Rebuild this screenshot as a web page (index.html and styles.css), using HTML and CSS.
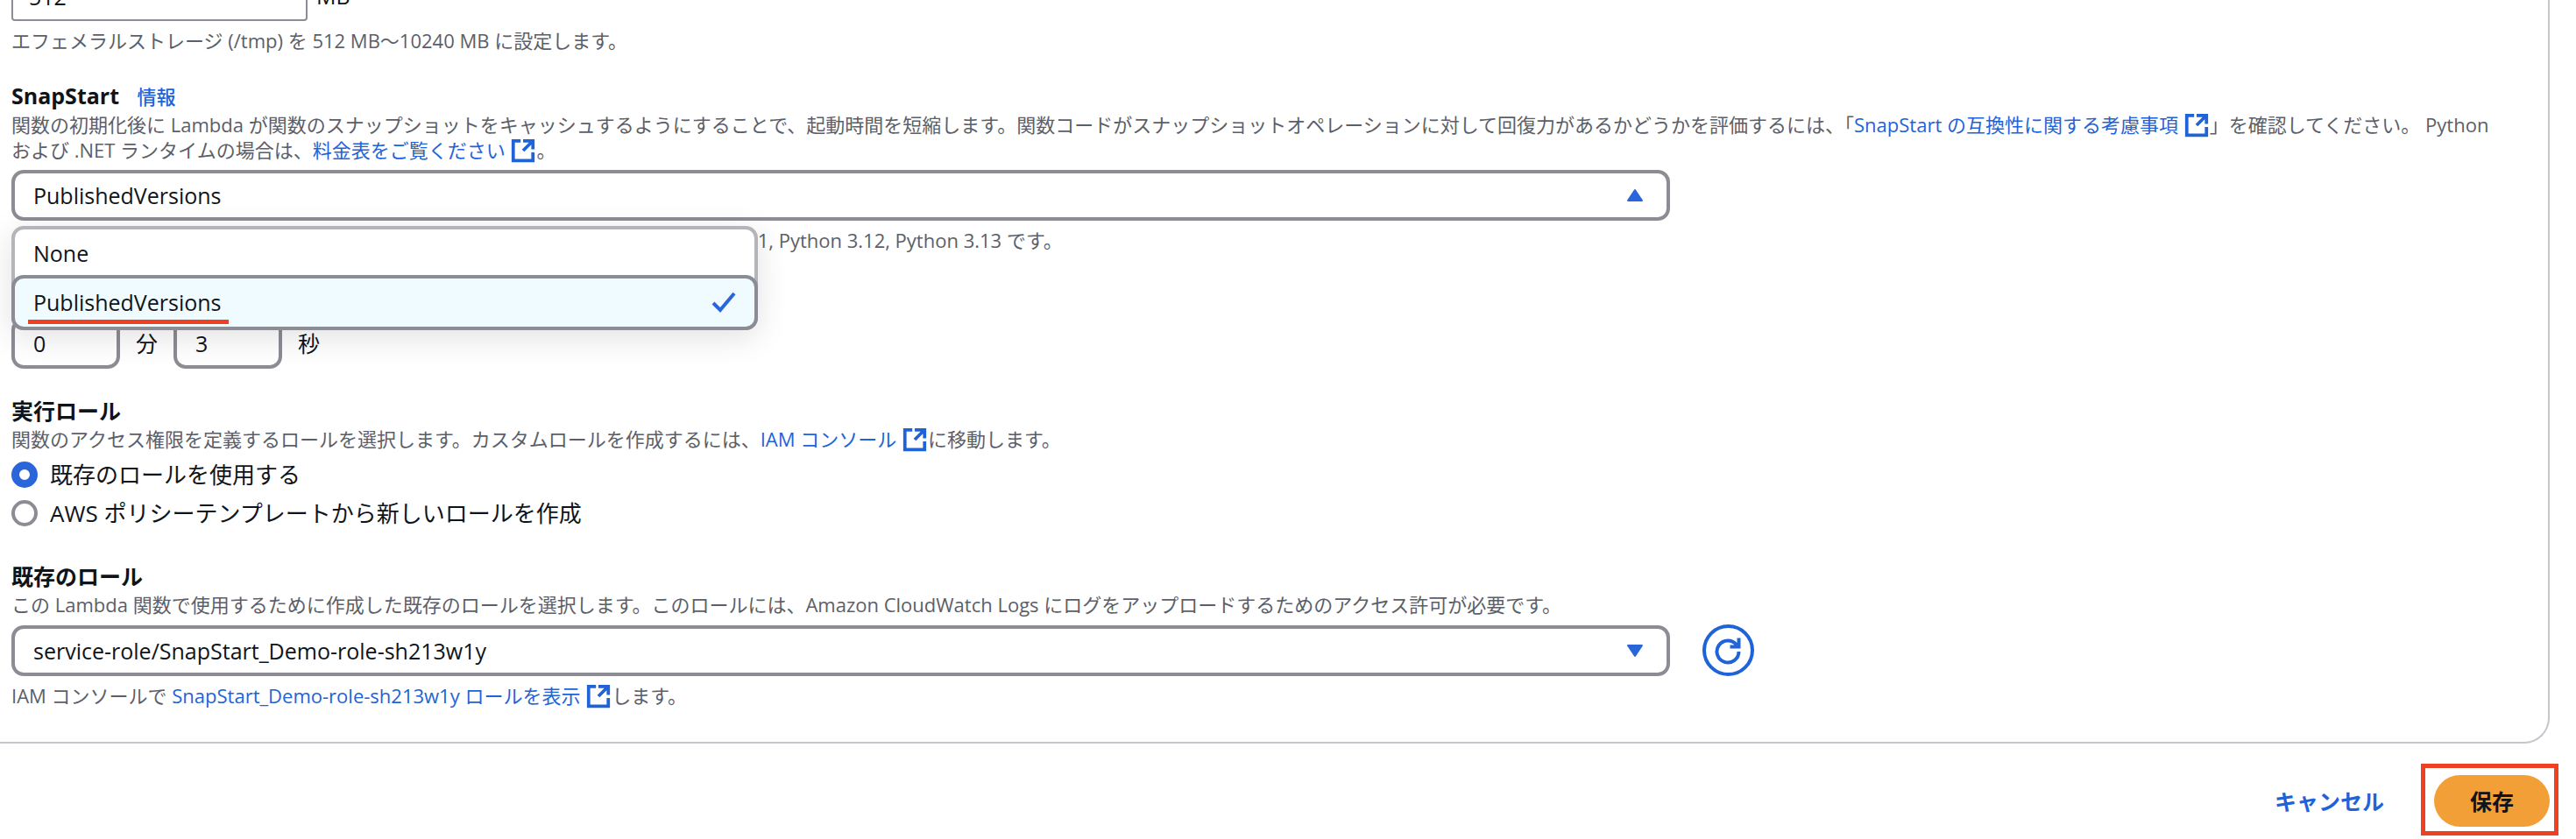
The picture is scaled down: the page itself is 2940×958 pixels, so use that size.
FILE: index.html
```html
<!DOCTYPE html>
<html lang="ja">
<head>
<meta charset="UTF-8">
<meta name="viewport" content="width=device-width, initial-scale=1.0">
<title>基本設定を編集</title>
<link rel="stylesheet" href="styles.css">
</head>
<body>
<!-- shared icons -->
<svg class="sprite" aria-hidden="true">
  <symbol id="external" viewBox="0 0 16 16">
    <path d="M6.500 2H2v12h12V9M8 2h6v5.200M14 2L8 8" fill="none" stroke="currentColor" stroke-width="2"/>
  </symbol>
</svg>

<form class="card" id="settings">
  <section class="field">
    <div class="row storage">
      <input class="box" type="text" id="storage" value="512" aria-label="エフェメラルストレージ">
      <label for="storage">MB</label>
    </div>
    <p class="hint">エフェメラルストレージ (/tmp) を 512 MB〜10240 MB に設定します。</p>
  </section>

  <section class="field">
    <div class="heading">
      <label for="snapstart">SnapStart</label>
      <a class="info" href="#">情報</a>
    </div>
    <p class="desc">関数の初期化後に Lambda が関数のスナップショットをキャッシュするようにすることで、起動時間を短縮します。関数コードがスナップショットオペレーションに対して回復力があるかどうかを評価するには、「<a href="#">SnapStart の互換性に関する考慮事項 <svg class="ext"><use href="#external"/></svg></a>」を確認してください。 Python および .NET ランタイムの場合は、<a href="#">料金表をご覧ください <svg class="ext"><use href="#external"/></svg></a>。</p>
    <div class="select">
      <select class="box" id="snapstart">
        <option>None</option>
        <option selected>PublishedVersions</option>
      </select>
      <svg class="caret" viewBox="0 0 20 16"><path d="M10 2L18 14H2z" fill="currentColor" stroke="currentColor" stroke-width="2" stroke-linejoin="round"/></svg>
      <ul class="menu" role="listbox" aria-label="SnapStart">
        <li role="option">None</li>
        <li role="option" class="selected" aria-selected="true">
          <span class="underlined">PublishedVersions</span>
          <svg class="check" viewBox="0 0 28 24"><path d="M2 13L10 21L26 2" fill="none" stroke="currentColor" stroke-width="4"/></svg>
        </li>
      </ul>
    </div>
    <p class="hint">サポートされているランタイムは .NET 8 (C#/F# / PowerShell), Java 11, Java 17, Java 21, Python 3.12, Python 3.13 です。</p>
  </section>

  <section class="field timeout">
    <div class="heading">タイムアウト</div>
    <div class="row">
      <input class="box" type="text" id="minutes" value="0">
      <label for="minutes">分</label>
      <input class="box" type="text" id="seconds" value="3">
      <label for="seconds">秒</label>
    </div>
  </section>

  <section class="field">
    <div class="heading">実行ロール</div>
    <p class="desc">関数のアクセス権限を定義するロールを選択します。カスタムロールを作成するには、<a href="#">IAM コンソール <svg class="ext"><use href="#external"/></svg></a>に移動します。</p>
    <div class="radios">
      <label><input type="radio" name="role" checked>既存のロールを使用する</label>
      <label><input type="radio" name="role">AWS ポリシーテンプレートから新しいロールを作成</label>
    </div>
  </section>

  <section class="field">
    <div class="heading"><label for="existing">既存のロール</label></div>
    <p class="desc">この Lambda 関数で使用するために作成した既存のロールを選択します。このロールには、Amazon CloudWatch Logs にログをアップロードするためのアクセス許可が必要です。</p>
    <div class="row role">
      <div class="select">
        <select class="box" id="existing">
          <option>service-role/SnapStart_Demo-role-sh213w1y</option>
        </select>
        <svg class="caret" viewBox="0 0 20 16"><path d="M10 14L18 2H2z" fill="currentColor" stroke="currentColor" stroke-width="2" stroke-linejoin="round"/></svg>
      </div>
      <button class="refresh" type="button" aria-label="更新">
        <svg viewBox="0 0 32 32"><path d="M28.500 17A12.500 12.500 0 1 1 26 9.500M28.500 1.500V11.500H18.500" fill="none" stroke="currentColor" stroke-width="4"/></svg>
      </button>
    </div>
    <p class="hint">IAM コンソールで <a href="#">SnapStart_Demo-role-sh213w1y ロールを表示 <svg class="ext"><use href="#external"/></svg></a>します。</p>
  </section>
</form>

<footer class="actions">
  <a class="cancel" href="#">キャンセル</a>
  <span class="highlight"><button class="save" type="submit" form="settings">保存</button></span>
</footer>
</body>
</html>
```
FILE: styles.css
```css
* {
  box-sizing: border-box;
}
body {
  margin: 0;
  overflow: hidden;
  background: #fff;
  color: #0f141a;
  font-family: "Open Sans", "Noto Sans CJK JP", sans-serif;
  font-size: 25px;
  line-height: 36px;
}
a {
  color: #1f63d8;
  text-decoration: none;
}
p {
  margin: 0;
}
input, select, button {
  font: inherit;
  color: inherit;
}
.sprite {
  display: none;
}

/* card */
.card {
  margin-top: -34px;
  margin-right: 30px;
  padding: 0 56px 38px 13px;
  border: solid #c6c6cd;
  border-width: 0 2px 2px 0;
  border-radius: 0 0 29px 0;
}
.field {
  margin-bottom: 30px;
}
.field:last-child {
  margin-bottom: 0;
}
.row {
  display: flex;
  align-items: center;
}
.heading {
  font-weight: 700;
}
.info {
  margin-left: 14px;
  font-size: 22px;
  font-weight: 500;
}
.desc, .hint {
  color: #5c5f69;
  font-size: 22px;
  line-height: 29px;
}
.desc {
  margin-bottom: 8px;
}
.hint {
  margin-top: 8px;
}
.ext {
  width: 30px;
  height: 30px;
  margin: -6px 0 -2px;
  vertical-align: middle;
}

/* inputs */
.box {
  height: 58px;
  padding: 0 21px;
  border: 4px solid #8c8c94;
  border-radius: 14px;
  background: #fff;
}
.storage {
  gap: 10px;
}
.storage .box {
  width: 338px;
  padding: 2px 18px 0;
  border-width: 2px;
  border-radius: 4px;
}
.timeout .heading {
  margin-bottom: 8px;
}
.timeout .row {
  gap: 18px;
}
.timeout .box {
  width: 124px;
}
.select {
  position: relative;
  width: calc(100% * 2 / 3);
}
.select .box {
  width: 100%;
  appearance: none;
}
.caret {
  position: absolute;
  top: 21px;
  right: 30px;
  width: 20px;
  height: 16px;
  color: #2a66da;
}

/* open list */
.menu {
  position: absolute;
  top: 64px;
  left: 0;
  z-index: 1;
  width: 45%;
  margin: 0;
  padding: 0;
  list-style: none;
  border: 4px solid #b4b4bb;
  border-radius: 14px;
  background: #fff;
  box-shadow: 0 8px 36px rgba(0, 7, 22, 0.12);
}
.menu li {
  display: flex;
  justify-content: space-between;
  align-items: center;
  height: 56px;
  padding: 0 21px 2px;
}
.menu .selected {
  height: 63px;
  margin: -4px;
  border: 4px solid #8c8c94;
  border-radius: 14px;
  background: #f0fbff;
}
.underlined {
  position: relative;
}
.underlined::after {
  content: "";
  position: absolute;
  left: -6px;
  right: -8px;
  bottom: -7px;
  height: 5px;
  background: #ee4023;
}
.check {
  width: 28px;
  height: 24px;
  color: #2a66da;
}

/* radios */
.radios {
  display: grid;
  gap: 8px;
  padding-bottom: 6px;
  font-size: 26px;
}
.radios label {
  display: flex;
  align-items: center;
  gap: 14px;
}
.radios input {
  appearance: none;
  width: 30px;
  height: 30px;
  margin: 0;
  border: 4px solid #8c8c94;
  border-radius: 50%;
}
.radios input:checked {
  border: 9px solid #2a66da;
}

.role {
  gap: 37px;
}
.refresh {
  display: flex;
  justify-content: center;
  align-items: center;
  width: 59px;
  height: 59px;
  padding: 0;
  border: 4px solid #1f63d8;
  border-radius: 50%;
  background: #fff;
  color: #1f63d8;
}
.refresh svg {
  width: 32px;
  height: 32px;
}

/* footer */
.actions {
  display: flex;
  justify-content: flex-end;
  align-items: center;
  gap: 57px;
  padding: 36px 30px 15px;
  font-weight: 700;
}
.highlight {
  position: relative;
}
.highlight::after {
  content: "";
  position: absolute;
  inset: -13px -10px -10px -15px;
  border: 5px solid #ee4023;
  pointer-events: none;
}
.save {
  display: block;
  width: 132px;
  height: 59px;
  border: 0;
  border-radius: 30px;
  background: #f29f38;
}
```
